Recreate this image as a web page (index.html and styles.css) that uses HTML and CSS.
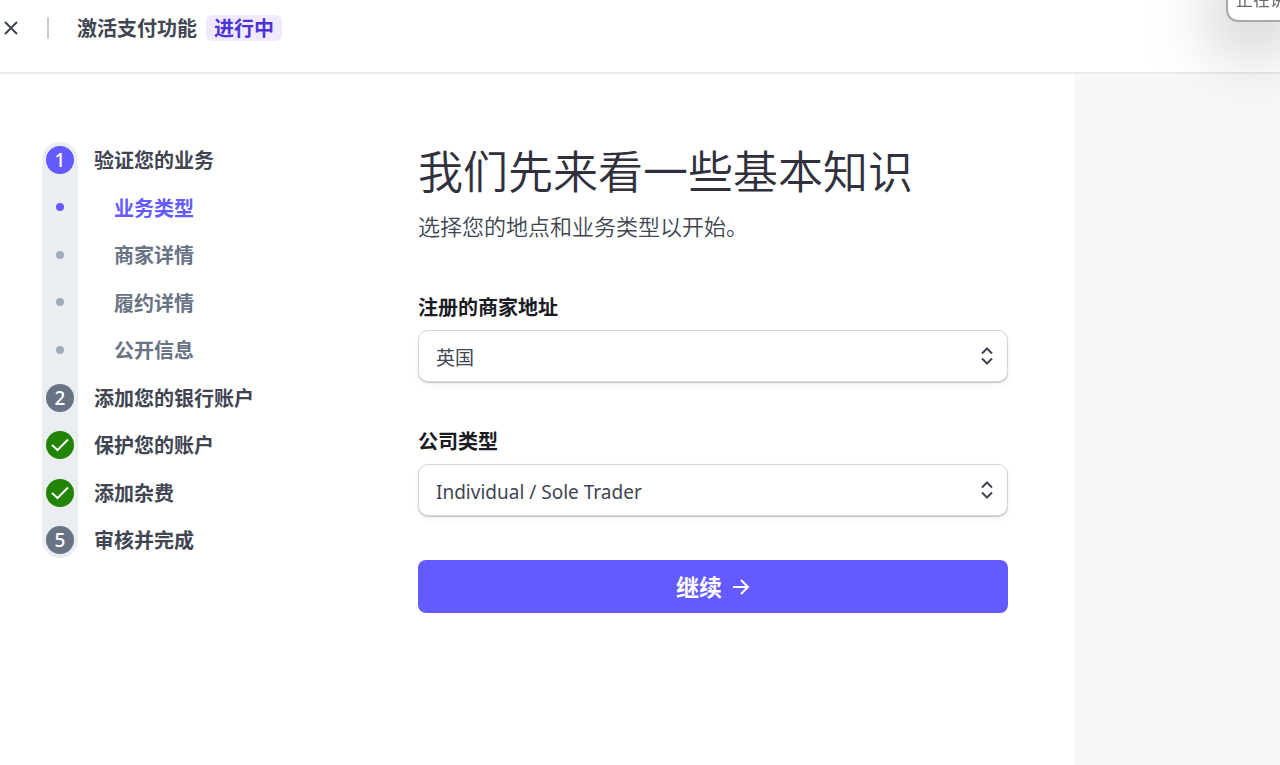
FILE: index.html
```html
<!DOCTYPE html>
<html lang="zh-CN">
	<head>
		<meta charset="UTF-8" />
		<meta name="viewport" content="width=device-width, initial-scale=1.0" />
		<title>激活支付功能</title>
		<link rel="stylesheet" href="styles.css">
	</head>
	<body>
		<header class="header">
			<button type="button" class="close-button" aria-label="关闭">
				<svg width="16" height="16" viewBox="0 0 16 16"><path d="M2 2l12 12M14 2L2 14" /></svg>
			</button>
			<span class="divider"></span>
			<span class="header-title">激活支付功能</span>
			<span class="badge">进行中</span>
		</header>

		<div class="layout">
			<main class="content">
				<nav class="steps">
					<ol class="step-list">
						<li class="step">
							<span class="marker"><span class="circle circle-active">1</span></span>
							<span class="step-name">验证您的业务</span>
						</li>
						<li class="step substep current">
							<span class="marker"><span class="dot"></span></span>
							<a href="#" class="step-name">业务类型</a>
						</li>
						<li class="step substep">
							<span class="marker"><span class="dot"></span></span>
							<a href="#" class="step-name">商家详情</a>
						</li>
						<li class="step substep">
							<span class="marker"><span class="dot"></span></span>
							<a href="#" class="step-name">履约详情</a>
						</li>
						<li class="step substep">
							<span class="marker"><span class="dot"></span></span>
							<a href="#" class="step-name">公开信息</a>
						</li>
						<li class="step">
							<span class="marker"><span class="circle">2</span></span>
							<span class="step-name">添加您的银行账户</span>
						</li>
						<li class="step">
							<span class="marker">
								<span class="circle circle-done">
									<svg width="28" height="28" viewBox="0 0 28 28"><path d="M6 14l5.500 5L22 8.500" /></svg>
								</span>
							</span>
							<span class="step-name">保护您的账户</span>
						</li>
						<li class="step">
							<span class="marker">
								<span class="circle circle-done">
									<svg width="28" height="28" viewBox="0 0 28 28"><path d="M6 14l5.500 5L22 8.500" /></svg>
								</span>
							</span>
							<span class="step-name">添加杂费</span>
						</li>
						<li class="step">
							<span class="marker"><span class="circle">5</span></span>
							<span class="step-name">审核并完成</span>
						</li>
					</ol>
				</nav>

				<form class="form">
					<h1 class="heading">我们先来看一些基本知识</h1>
					<p class="subheading">选择您的地点和业务类型以开始。</p>

					<label for="country" class="label">注册的商家地址</label>
					<div class="select-wrap">
						<select id="country" class="select-box">
							<option>英国</option>
						</select>
						<svg class="select-icon" width="14" height="18" viewBox="0 0 14 18"><path d="M2 6.500l5-5 5 5M2 11.500l5 5 5-5" /></svg>
					</div>

					<label for="company-type" class="label">公司类型</label>
					<div class="select-wrap">
						<select id="company-type" class="select-box">
							<option>Individual / Sole Trader</option>
						</select>
						<svg class="select-icon" width="14" height="18" viewBox="0 0 14 18"><path d="M2 6.500l5-5 5 5M2 11.500l5 5 5-5" /></svg>
					</div>

					<button type="submit" class="submit-button">
						继续
						<svg width="18" height="18" viewBox="0 0 18 18"><path d="M1 9h15M9 2l7 7-7 7" /></svg>
					</button>
				</form>
			</main>
			<aside class="side"></aside>
		</div>

		<div class="toast">正在讲</div>
	</body>
</html>
```

FILE: styles.css
```css
:root {
	--text-color: #414552;
	--heading-color: #30313d;
	--muted-color: #687385;
	--accent-color: #635bff;
	--rail-color: #ebeef1;
	--side-color: #f6f8fa;
	--done-color: #228403;
}
* {
	box-sizing: border-box;
}
body {
	margin: 0;
	min-height: 100vh;
	display: flex;
	flex-direction: column;
	font-family: "Noto Sans", "Noto Sans CJK SC", sans-serif;
	font-size: 20px;
	line-height: 28px;
	color: var(--text-color);
	background-color: #fff;
}
svg {
	display: block;
	fill: none;
	stroke: currentColor;
	stroke-width: 2;
}
.header {
	display: flex;
	align-items: center;
	height: 74px;
	padding: 0 3px 16px;
	border-bottom: 2px solid #ebebed;
}
.close-button {
	padding: 0;
	border: none;
	background: none;
	color: var(--text-color);
	cursor: pointer;
}
.divider {
	width: 2px;
	height: 22px;
	margin: 0 28px;
	background-color: #c9cbd0;
}
.header-title {
	padding-top: 2px;
	font-weight: 600;
}
.badge {
	margin-left: 9px;
	padding: 2px 8px 0;
	border-radius: 6px;
	line-height: 24px;
	font-weight: 600;
	color: #4b35d8;
	background-color: #f0e9ff;
}
.layout {
	flex: 1;
	display: flex;
}
.content {
	flex: 1;
	display: flex;
	padding: 62px 66px 0 42px;
}
.side {
	flex: 0 0 206px;
	background-color: var(--side-color);
}
.steps {
	flex: 0 0 376px;
}
.step-list {
	display: grid;
	grid-auto-rows: 1fr;
	min-height: 428px;
	margin: 0;
	padding: 0;
	list-style: none;
}
.step {
	display: flex;
	line-height: 44px;
	font-weight: 600;
}
.marker {
	display: flex;
	align-items: center;
	justify-content: center;
	width: 36px;
	background-color: var(--rail-color);
}
.step:first-child .marker {
	margin-top: 6px;
	padding-bottom: 6px;
	border-radius: 18px 18px 0 0;
}
.step:last-child .marker {
	margin-bottom: 6px;
	padding-top: 6px;
	border-radius: 0 0 18px 18px;
}
.circle {
	width: 28px;
	height: 28px;
	border-radius: 50%;
	line-height: 29px;
	text-align: center;
	font-size: 19px;
	font-weight: 500;
	color: #fff;
	background-color: var(--muted-color);
}
.circle-active {
	background-color: var(--accent-color);
}
.circle-done {
	background-color: var(--done-color);
}
.dot {
	width: 8px;
	height: 8px;
	border-radius: 50%;
	background-color: #a3acba;
}
.step-name {
	margin-left: 16px;
	padding-top: 3px;
}
.substep .step-name {
	margin-left: 36px;
	color: var(--muted-color);
	text-decoration: none;
}
.current .dot {
	background-color: var(--accent-color);
}
.current .step-name {
	color: var(--accent-color);
}
.form {
	flex: 1;
}
.heading {
	margin: 6px 0 0;
	font-size: 45px;
	line-height: 60px;
	font-weight: 350;
	color: var(--heading-color);
}
.subheading {
	margin: 8px 0 50px;
	font-size: 22px;
	line-height: 32px;
	font-weight: 350;
}
.label {
	display: block;
	margin-bottom: 7px;
	line-height: 31px;
	font-weight: 600;
	color: #1a1b25;
}
.select-wrap {
	display: grid;
	align-items: center;
	margin-bottom: 44px;
}
.select-box {
	grid-area: 1 / 1;
	width: 100%;
	height: 52px;
	padding: 3px 48px 0 17px;
	border: 1px solid #d5d7dc;
	border-radius: 10px;
	appearance: none;
	font: inherit;
	font-size: 19px;
	color: var(--text-color);
	background-color: #fff;
	box-shadow: 0 1px 1px rgba(0, 0, 0, 0.2), 0 3px 6px rgba(0, 0, 0, 0.05);
}
.select-icon {
	grid-area: 1 / 1;
	justify-self: end;
	margin-right: 14px;
	pointer-events: none;
}
.submit-button {
	display: flex;
	align-items: center;
	justify-content: center;
	gap: 10px;
	width: 100%;
	height: 53px;
	border: none;
	border-radius: 8px;
	font: inherit;
	font-size: 23px;
	font-weight: 600;
	color: #fff;
	background-color: var(--accent-color);
	cursor: pointer;
}
/* call notice hanging off the top right corner */
.toast {
	position: fixed;
	top: -20px;
	right: 0;
	width: 54px;
	height: 42px;
	padding: 6px 0 0 8px;
	overflow: hidden;
	white-space: nowrap;
	border: 2px solid #a9a9a9;
	border-right: none;
	border-radius: 0 0 0 12px;
	font-size: 17px;
	line-height: 24px;
	color: #6b6b70;
	background-color: #fff;
	box-shadow: 0 14px 72px rgba(0, 0, 0, 0.5);
}
```
